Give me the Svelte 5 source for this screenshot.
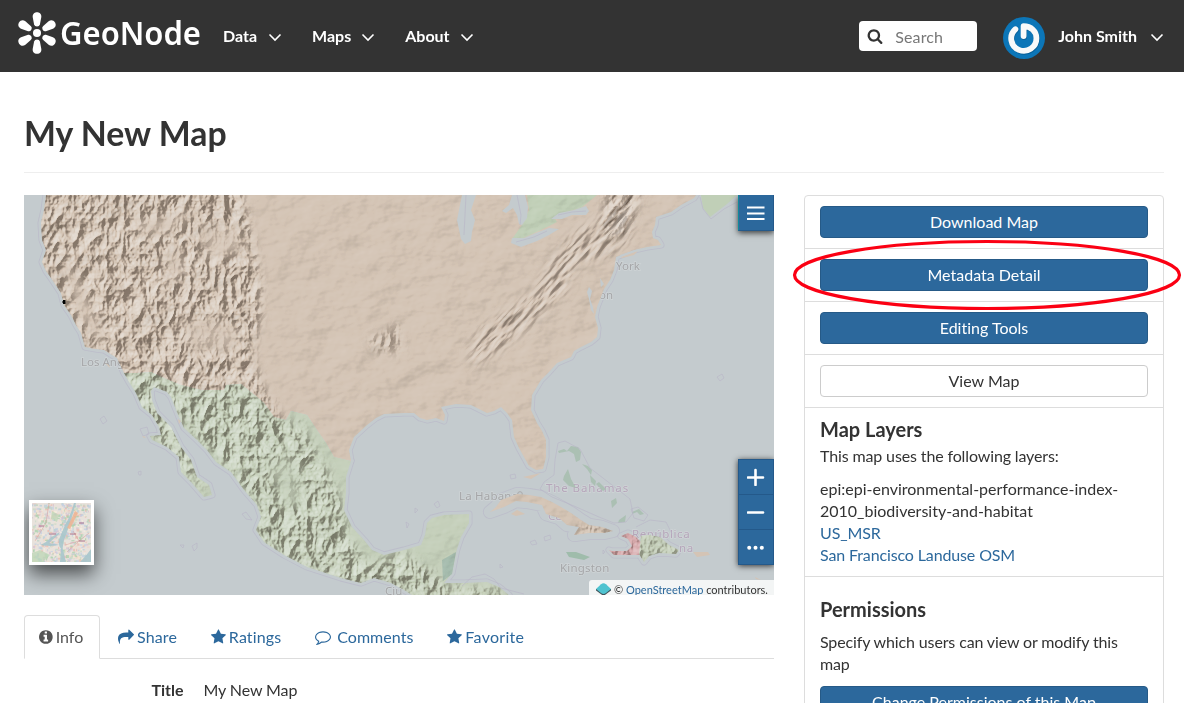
<script>
  const menu = [
    { label: 'Data', gap: 11 },
    { label: 'Maps', gap: 10 },
    { label: 'About', gap: 10 }
  ];

  const icons = {
    info: 'M1152 1376v-160q0-14-9-23t-23-9h-96v-512q0-14-9-23t-23-9h-320q-14 0-23 9t-9 23v160q0 14 9 23t23 9h96v320h-96q-14 0-23 9t-9 23v160q0 14 9 23t23 9h448q14 0 23-9t9-23zm-128-896v-160q0-14-9-23t-23-9h-192q-14 0-23 9t-9 23v160q0 14 9 23t23 9h192q14 0 23-9t9-23zm640 416q0 209-103 385.5t-279.5 279.5-385.5 103-385.5-103-279.5-279.5-103-385.5 103-385.5 279.5-279.5 385.5-103 385.5 103 279.5 279.5 103 385.5z',
    star: 'M1728 647q0 22-26 48l-363 354 86 500q1 7 1 20 0 21-10.5 35.5t-30.5 14.5q-19 0-40-12l-449-236-449 236q-22 12-40 12-21 0-31.5-14.5t-10.5-35.5q0-6 2-20l86-500-364-354q-25-27-25-48 0-37 56-46l502-73 225-455q19-41 49-41t49 41l225 455 502 73q56 9 56 46z',
    share: 'M1792 640q0 26-19 45l-512 512q-19 19-45 19t-45-19-19-45v-256h-224q-98 0-175.5 6t-154 21.5-133 42.5-105.5 69.5-80 101-48.5 138.5-17.5 181q0 55 5 123 0 6 2.5 23.5t2.5 26.5q0 15-8.5 25t-23.5 10q-16 0-28-17-7-9-13-22t-13.5-30-10.5-24q-127-285-127-451 0-199 53-333 162-403 875-403h224v-256q0-26 19-45t45-19 45 19l512 512q19 19 19 45z',
    comment: 'M896 384q-204 0-381.5 69.5t-282 187.5-104.5 255q0 112 71.5 213.5t201.5 175.5l87 50-27 96q-24 91-70 172 152-63 275-171l43-38 57 6q69 8 130 8 204 0 381.5-69.5t282-187.5 104.5-255-104.5-255-282-187.5-381.5-69.5zm896 512q0 174-120 321.5t-326 233-450 85.5q-70 0-145-8-198 175-460 242-49 14-114 22h-5q-15 0-27-10.5t-16-27.5v-1q-3-4-.5-12t2-10 4.5-9.5l6-9 7-8.5 8-9q7-8 31-34.5t34.5-38 31-39.5 32.5-51 27-59 26-76q-157-89-247.5-220t-90.5-281q0-174 120-321.5t326-233 450-85.5 450 85.5 326 233 120 321.5z',
    search: 'M1216 832q0-185-131.5-316.5t-316.5-131.5-316.5 131.5-131.5 316.5 131.5 316.5 316.5 131.5 316.5-131.5 131.5-316.5zm512 832q0 52-38 90t-90 38q-54 0-90-38l-343-342q-179 124-399 124-143 0-273.5-55.5t-225-150-150-225-55.5-273.5 55.5-273.5 150-225 225-150 273.5-55.5 273.5 55.5 225 150 150 225 55.5 273.5q0 220-124 399l343 343q37 37 37 90z'
  };

  const tabs = [
    { label: 'Info', icon: 'info', vb: '128 0 1536 1792', w: 13.7, gap: 3, track: 0, active: true },
    { label: 'Share', icon: 'share', vb: '0 0 1792 1792', w: 16, gap: 3, track: 0.12 },
    { label: 'Ratings', icon: 'star', vb: '64 0 1664 1792', w: 14.9, gap: 3, track: 0.12 },
    { label: 'Comments', icon: 'comment', vb: '0 0 1792 1792', w: 16, gap: 6, track: 0.05 },
    { label: 'Favorite', icon: 'star', vb: '64 0 1664 1792', w: 14.9, gap: 3, track: 0.3 }
  ];

  const buttons = [
    { label: 'Download Map', primary: true },
    { label: 'Metadata Detail', primary: true, marked: true },
    { label: 'Editing Tools', primary: true },
    { label: 'View Map', primary: false }
  ];

  const usa = 'M22 0L20 15L17 28L18 45L22 55L18 67L22 76L27 83L37 98L40 110L47 120L52 130L57 138L61 152L72 154L80 155L93 163L100 178L113 178L127 177L142 184L157 190L177 195L200 195L202 190L217 189L233 202L240 208L250 222L262 225L267 216L283 220L293 235L302 248L310 262L327 266L325 255L330 242L343 230L352 223L360 219L380 218L390 218L396 223L403 225L412 223L420 226L421 220L417 212L432 209L447 210L455 214L463 218L470 216L477 212L483 218L488 225L490 242L495 253L500 262L505 271L512 275L519 274L522 262L522 245L518 236L513 228L507 215L508 200L517 185L525 177L533 168L547 162L550 156L557 152L567 147L573 142L574 133L571 122L573 112L580 94L586 85L590 75L592 62L610 55L623 52L637 50L634 45L629 43L628 37L631 30L632 22L647 17L657 10L670 3L672 0Z';
  const mexico = 'M113 178L127 177L142 184L157 190L177 195L200 195L202 190L217 189L233 202L240 208L250 222L262 225L267 216L283 220L293 235L302 248L310 262L327 266L322 282L322 298L320 315L328 332L340 345L348 355L360 360L380 355L397 350L401 340L403 328L408 323L420 320L445 319L445 328L437 342L433 354L432 358L428 378L420 388L440 388L463 387L475 392L485 400L388 400L380 395L367 388L350 383L337 388L317 383L283 372L260 360L240 347L232 335L237 322L233 310L220 295L207 277L192 267L183 255L173 245L160 233L155 222L147 202L143 197L130 192L127 196L128 205L133 218L147 232L157 252L167 265L173 282L185 290L188 300L180 302L167 287L157 277L155 262L143 252L128 245L126 241L137 240L135 232L128 220L118 212L112 198L105 187L100 178Z';
  const cuba = 'M466 317L472 312L477 305L493 299L505 300L517 302L528 307L537 312L547 318L557 325L565 330L578 332L589 336L580 338L565 338L550 340L555 332L543 330L535 323L522 319L518 310L503 307L492 306L480 312Z';
  const hispaniolaW = 'M597 341L604 338L612 342L617 347L617 360L610 360L590 360L585 355L588 356L603 356L608 351L604 344Z';
  const hispaniolaE = 'M617 341L625 340L636 342L645 350L655 355L652 359L635 358L625 361L620 367L615 359Z';

  const hues = ['#c4d8c3', '#efd5ca', '#b8cfd8', '#f2e3cf', '#d6c1d1', '#c2cfe3', '#f6ecdf', '#e9b9ae', '#a7d0a9'];
  let seed = 11;
  const rnd = () => ((seed = (seed * 16807) % 2147483647) / 2147483647);
  const blocks = Array.from({ length: 700 }, () => ({
    x: rnd() * 59, y: rnd() * 59, w: 1 + rnd() * 2.2, h: 1 + rnd() * 2,
    fill: hues[Math.floor(rnd() * hues.length)]
  }));
</script>

{#snippet chevron()}
  <svg class="chev" width="14" height="9" viewBox="0 0 14 9"><path d="M1.5 1.5L7 7L12.5 1.5" fill="none" stroke="#fff" stroke-width="1.6" /></svg>
{/snippet}

<header>
  <a class="logo" href="#top" aria-label="GeoNode">
    <svg width="186" height="46" viewBox="0 0 186 46">
      <g fill="#fff">
        {#each [0, 60, 120, 180, 240, 300] as a}
          <path transform="rotate({a} 21 22)" d="M21 1.2C24 1.2 25.6 3.4 25.3 6.1L23.9 13.4Q23.4 15.4 21 15.4Q18.6 15.4 18.1 13.4L16.7 6.1C16.4 3.4 18 1.2 21 1.2Z" />
        {/each}
        <circle cx="21" cy="22" r="4" />
      </g>
      <text x="44" y="34" textLength="141" lengthAdjust="spacingAndGlyphs">GeoNode</text>
    </svg>
  </a>
  <nav>
    {#each menu as m}
      <a href="#top" style="gap:{m.gap}px">{m.label}{@render chevron()}</a>
    {/each}
  </nav>
  <div class="search">
    <svg width="16" height="16" viewBox="0 0 1792 1792"><path fill="#333" d={icons.search} /></svg>
    <span>Search</span>
  </div>
  <svg class="avatar" width="42" height="42" viewBox="0 0 42 42">
    <circle cx="21" cy="21" r="21" fill="#0c76b8" />
    <g fill="none" stroke-linecap="round" stroke-linejoin="round">
      <path d="M20.6 19V9.2C28 9.2 33.4 14.3 33.4 21A12.6 12.4 0 1 1 12.4 12.2" stroke="#075f97" stroke-width="5.8" transform="translate(.5 .9)" />
      <path d="M20.6 19V9.2C28 9.2 33.4 14.3 33.4 21A12.6 12.4 0 1 1 12.4 12.2" stroke="#f8f9fa" stroke-width="5.8" />
    </g>
  </svg>
  <a class="user" href="#top">John Smith{@render chevron()}</a>
</header>

<main>
  <h1>My New Map</h1>
  <div class="cols">
    <section class="left">
      <div class="map">
        <svg class="terrain" width="750" height="400" viewBox="0 0 750 400">
          <defs>
            <filter id="relief" x="0" y="0" width="100%" height="100%" color-interpolation-filters="sRGB">
              <feTurbulence type="turbulence" baseFrequency="0.06 0.042" numOctaves="4" seed="8" result="n" />
              <feDiffuseLighting in="n" surfaceScale="-5" diffuseConstant="1" lighting-color="#fff"><feDistantLight azimuth="220" elevation="31" /></feDiffuseLighting>
              <feComponentTransfer><feFuncR type="linear" slope=".4" intercept=".315" /><feFuncG type="linear" slope=".42" intercept=".302" /><feFuncB type="linear" slope=".43" intercept=".292" /></feComponentTransfer>
            </filter>
            <filter id="soft" x="0" y="0" width="100%" height="100%" color-interpolation-filters="sRGB">
              <feTurbulence type="fractalNoise" baseFrequency="0.025 0.04" numOctaves="4" seed="3" />
              <feDiffuseLighting surfaceScale="1.6" diffuseConstant="1" lighting-color="#fff"><feDistantLight azimuth="215" elevation="31" /></feDiffuseLighting>
              <feComponentTransfer><feFuncR type="linear" slope=".4" intercept=".3" /><feFuncG type="linear" slope=".4" intercept=".3" /><feFuncB type="linear" slope=".4" intercept=".298" /></feComponentTransfer>
            </filter>
            <filter id="ridge" x="0" y="0" width="100%" height="100%" color-interpolation-filters="sRGB">
              <feTurbulence type="fractalNoise" baseFrequency="0.035 0.15" numOctaves="3" seed="5" />
              <feDiffuseLighting surfaceScale="3.5" diffuseConstant="1" lighting-color="#fff"><feDistantLight azimuth="260" elevation="31" /></feDiffuseLighting>
              <feComponentTransfer><feFuncR type="linear" slope=".36" intercept=".33" /><feFuncG type="linear" slope=".37" intercept=".32" /><feFuncB type="linear" slope=".38" intercept=".312" /></feComponentTransfer>
            </filter>
            <filter id="feather" x="-20%" y="-20%" width="140%" height="140%"><feGaussianBlur stdDeviation="5" /></filter>
            <clipPath id="land"><path d={usa} /><path d={mexico} /><path d={cuba} /><path d={hispaniolaW} /><path d={hispaniolaE} /></clipPath>
            <mask id="highlands" maskUnits="userSpaceOnUse" x="0" y="0" width="750" height="400">
              <g filter="url(#feather)">
                <path fill="#fff" d="M10 -10H215L225 25L232 60L238 90L236 130L228 160L240 195L262 230L275 225L300 270L315 300L325 345L345 370L380 355V410H340L230 345L235 310L180 250L150 215L185 300L150 270L100 190L55 145L15 70Z" />
                <path fill="#000" opacity=".95" d="M36 62L52 75L70 112L83 149L72 150L50 116Z" />
                <path fill="#000" opacity=".7" d="M105 25L175 15L150 38L120 43ZM137 58L158 52L160 80L145 88ZM174 28L215 36L224 62L178 62ZM156 128L180 122L216 130L214 156L168 160ZM240 265L275 262L280 310L258 315Z" />
                <path fill="#fff" d="M380 360L400 370L425 392L480 395V405H370Z" />
                <path fill="#fff" opacity=".7" d="M553 330L585 328L592 342H548ZM590 338H660V370H580ZM345 145L375 128L378 158L348 156ZM580 -5H620L600 40L580 45Z" />
              </g>
            </mask>
            <mask id="appalachia" maskUnits="userSpaceOnUse" x="0" y="0" width="750" height="400">
              <path filter="url(#feather)" fill="#fff" d="M444 160L455 135L480 118L510 98L528 65L545 42L575 25L590 -5L615 -5L605 45L590 58L555 68L540 98L512 125L480 152L450 170Z" />
            </mask>
          </defs>

          <rect width="750" height="400" fill="#c4cbce" />
          <g fill="none" stroke="#b9b5c8" stroke-opacity=".65" stroke-width="7" stroke-linejoin="round"><path d={usa} /><path d={mexico} /><path d={cuba} stroke-width="14" /><path d={hispaniolaW} /><path d={hispaniolaE} /></g>
          <g fill="none" stroke="#c4cbce" stroke-width="5.4" stroke-linejoin="round"><path d={usa} /><path d={mexico} /><path d={cuba} stroke-width="12.4" /><path d={hispaniolaW} /><path d={hispaniolaE} /></g>

          <g class="place" font-size="11.5">
            <text x="57" y="171">Los Angeles</text>
            <text x="563" y="104">g</text>
            <text x="575" y="104">on</text>
            <text x="592" y="75">York</text>
            <text x="435" y="305" letter-spacing=".2">La Habana</text>
            <text x="536" y="377" letter-spacing=".2">Kingston</text>
            <g fill="#b5a5ba"><text x="522" y="297" letter-spacing=".9">The Bahamas</text><text x="524" y="325">Cu</text><text x="608" y="343" letter-spacing=".6">República</text><text x="655" y="357" letter-spacing=".6">na</text></g>
            <text x="361" y="400">Ciu</text>
          </g>
          <circle cx="496" cy="299" r="2.3" fill="none" stroke="#aaa" />

          <path d={usa} fill="#d4c4b5" />
          <path d={mexico} fill="#c4cfba" />
          <path d="M432 357L418 365L419 386L428 379Z" fill="#a5bcae" />
          <path d="M503 0L505 15L498 30L488 44L497 44L517 35L533 27L530 22L542 17L557 13L573 0Z" fill="#c0cfb7" />
          <path d="M677 0L679 13L686 22L703 9L713 0Z" fill="#c0cfb7" />
          <path d="M597 62L615 55L610 60L598 63Z" fill="#d4c4b5" />
          <path d={cuba} fill="#d4c4b5" />
          <path d="M487 319L493 315L501 319L492 321ZM499 282L517 278L507 284Z" fill="#d4c4b5" />
          <path d={hispaniolaW} fill="#d5a6a9" />
          <path d={hispaniolaE} fill="#c4cfba" />
          <path d="M542 357L552 357L566 362L560 365L545 362Z" fill="#9fbcab" />
          <path d="M669 357L684 357L686 360L673 362Z" fill="#d4c4b5" />
          <path d="M534 256L540 254L543 256L547 251L554 252L557 257L556 265L552 267L550 259L545 256L535 258ZM558 269L564 271L568 275L567 280L563 274ZM540 281L544 274L547 284L552 293L545 291L539 285ZM566 280L572 286L571 291L567 287ZM575 287L582 294L579 296L572 289ZM587 306L592 303L593 308L588 313ZM608 317L615 314L620 319L616 320L613 317L608 319ZM595 325L602 320L601 327L594 328Z" fill="#abc0b3" />

          <g class="shade" clip-path="url(#land)" opacity=".8"><rect width="750" height="400" filter="url(#soft)" /></g>
          <g class="shade" clip-path="url(#land)"><g mask="url(#highlands)"><rect width="750" height="400" filter="url(#relief)" /></g></g>
          <g class="shade" clip-path="url(#land)"><g mask="url(#appalachia)"><rect x="300" y="-200" width="450" height="500" transform="rotate(-48 525 85)" filter="url(#ridge)" /></g></g>
          <g fill="#c4cbce">
            <path d="M438 0L433 25L437 44L441 49L447 46L448 37L451 25L447 15L452 0Z" />
            <path d="M488 0L485 10L478 16L482 18L489 13L493 20L495 29L498 30L503 23L504 12L501 0Z" />
            <path d="M488 43L487 48L497 52L513 46L525 40L535 34L525 33L512 38L500 43Z" />
            <path d="M527 24L535 18L550 15L562 11L565 16L562 20L548 20L538 24Z" />
            <path d="M565 92L568 96L566 104L569 112L570 119L567 115L565 104L563 97ZM576 83L580 89L577 92ZM596 60L612 55L627 52L624 54L611 57L597 62Z" />
          </g>

          <g fill="none" stroke="#b9b5c8" stroke-opacity=".7" stroke-width=".9">
            <path d="M442 0L440 40M493 0L497 20L496 30M492 47L510 42L523 36M534 20L548 17L562 16M676 2L679 14L687 24L700 14L713 7M534 248L541 246L556 254L566 273L588 290L606 304L609 318L602 327L590 328L575 322L550 311L528 302L516 294L520 287L530 280L531 265ZM607 314L614 312L624 320L620 326L610 323ZM612 332L626 325L642 327L648 339M438 391L448 382L461 379L470 384L477 393L500 399" />
            <path d="M410 309l4-3 2 5-3 2zM391 313l3 2-3 3zM382 327l3 2-2 4zM506 347l5-2 2 4-5 1zM520 342l6-2 1 4-6 2zM486 280l5-1 1 4-5 1zM693 182l5-3 2 4-4 3zM76 224l4-3 3 5-4 3zM116 234l7-2 2 7-6 2zM114 277l3-1 0 4-2 0zM218 319l4-2 6 8-6-1zM156 350l4 0-1 3zM168 351l5-3 0 5-3 3zM579 355l2 2-2 2zM476 369l3 3-3 1z" />
          </g>
          <path d="M66 154l6-1 1 1zM81 168l4 2 1 3zM118 241l4 1-2 1zM154 224l3 2-2 3zM722 367l3 1-2 2zM731 382l6 3-5-1z" fill="#d4c4b5" />
          <path d="M39 105h2.5v4h-2.5zM38.5 106h3v2h-3z" fill="#000" />
        </svg>

        <button class="ctl menu" aria-label="Menu">
          <svg width="18" height="14" viewBox="0 0 18 14"><path d="M0 1.5H17.5M0 7.5H17.5M0 13H17.5" stroke="#fff" stroke-width="1.8" /></svg>
        </button>
        <div class="zoom">
          <button class="ctl" aria-label="Zoom in"><svg width="18" height="18" viewBox="0 0 18 18"><path d="M8.5 2V17M1 9.5H16" stroke="#fff" stroke-width="2.6" stroke-linecap="round" /></svg></button>
          <button class="ctl" aria-label="Zoom out"><svg width="18" height="18" viewBox="0 0 18 18"><path d="M1 9.5H16" stroke="#fff" stroke-width="2.6" stroke-linecap="round" /></svg></button>
          <button class="ctl" aria-label="More"><svg width="18" height="18" viewBox="0 0 18 18" fill="#fff"><circle cx="2.2" cy="9.7" r="2" /><circle cx="8.5" cy="9.7" r="2" /><circle cx="14.8" cy="9.7" r="2" /></svg></button>
        </div>
        <div class="thumb">
          <svg width="59" height="59" viewBox="0 0 59 59">
            <rect width="59" height="59" fill="#e8e2dc" />
            {#each blocks as b}<rect x={b.x} y={b.y} width={b.w} height={b.h} fill={b.fill} opacity=".75" />{/each}
            <path d="M42 0Q38 14 33 22L28 34Q25 40 29 46L28 59H34L31 47Q30 40 34 32L40 14L44 0ZM8 42Q14 40 18 35L28 29L26 32L17 40L27 42L18 43ZM48 59Q55 52 59 46V59Z" fill="#a9c7cc" opacity=".9" />
            <path d="M43 8L35 25L38 26L46 10Z" fill="#edb391" opacity=".85" />
            <path d="M0 50l8-3 10 5-7 7H0zM20 8l7 4-2 7-6-3z" fill="#b7d6b1" opacity=".65" />
            <path d="M33 42L47 38L57 30M35 49L47 38L41 28M3 38L14 20L17 0" fill="none" stroke="#d7a5a1" stroke-width=".6" />
            <path d="M17 31h7M38 31h6M47 38h6M7 23h5M47 20h5" stroke="#a05c79" stroke-width=".8" />
          </svg>
        </div>
        <div class="credit">
          <svg width="15" height="13" viewBox="0 0 15 13"><path d="M0 7.5L7.5 13L15 7.5V6H0Z" fill="#41545a" /><path d="M0 6L5 1.2Q7.5-.6 10 1.2L15 6L10 10Q7.5 11.8 5 10Z" fill="#4fc3d0" /></svg>
          <span>© <a href="#top">OpenStreetMap</a> contributors.</span>
        </div>
      </div>

      <div class="tabs">
        {#each tabs as t}
          <a href="#top" class:active={t.active} style="gap:{t.gap}px;letter-spacing:{t.track}px">
            <svg width={t.w} height="16" viewBox={t.vb}><path fill="currentColor" d={icons[t.icon]} /></svg>{t.label}
          </a>
        {/each}
      </div>
      <dl><dt>Title</dt><dd>My New Map</dd></dl>
    </section>

    <aside>
      {#each buttons as b}
        <div class="item">
          <button class="btn" class:primary={b.primary}>{b.label}</button>
          {#if b.marked}
            <svg class="ring" width="392" height="72" viewBox="0 0 392 72"><ellipse cx="196" cy="36" rx="192.5" ry="33.5" fill="none" stroke="#fb0013" stroke-width="3.2" /></svg>
          {/if}
        </div>
      {/each}
      <div class="item layers">
        <h4>Map Layers</h4>
        <p>This map uses the following layers:</p>
        <ul>
          <li>epi:epi-environmental-performance-index-2010_biodiversity-and-habitat</li>
          <li class="tight"><a href="#top">US_MSR</a></li>
          <li class="tight"><a href="#top">San Francisco Landuse OSM</a></li>
        </ul>
      </div>
      <div class="item perms">
        <h4>Permissions</h4>
        <p>Specify which users can view or modify this map</p>
        <button class="btn primary">Change Permissions of this Map</button>
      </div>
    </aside>
  </div>
</main>

<style>
  :global(html), :global(body) { margin: 0; height: 703px; overflow: hidden; background: #fff; }
  :global(#app) { height: 703px; overflow: hidden; font: 16px/22px Lato, "Liberation Sans", sans-serif; font-variant-ligatures: none; color: #333; }
  a { color: #2c689c; text-decoration: none; }
  svg { display: block; flex: none; }
  h1, h4, p, ul, dl, dd { margin: 0; padding: 0; }
  ul { list-style: none; }

  header { display: flex; align-items: flex-start; height: 72px; background: #333; box-sizing: border-box; padding: 0 20px 0 16px; }
  header a { color: #fff; font-weight: 700; display: flex; align-items: center; }
  header .logo { margin-top: 11px; width: 186px; }
  .logo svg { overflow: visible; }
  .logo text { font: 600 32px "Noto Sans", sans-serif; fill: #fff; }
  nav { display: flex; gap: 30px; margin: 25px auto 0 21px; }
  .chev { margin-top: 2px; }
  .search { display: flex; align-items: center; width: 118px; height: 30px; margin-top: 21px; background: #fff; border-radius: 4px; box-sizing: border-box; padding-left: 8px; gap: 12px; color: #777; }
  .search span { padding-top: 2px; letter-spacing: .15px; }
  .avatar { margin: 17px 13px 0 26px; }
  .user { gap: 13px; margin-top: 25px; }

  main { padding: 0 20px 0 24px; }
  h1 { font-size: 33.8px; font-weight: 700; line-height: 40px; height: 101px; padding-top: 41px; box-sizing: border-box; border-bottom: 1px solid #eee; margin-bottom: 22px; }
  .cols { display: flex; gap: 30px; align-items: flex-start; }
  .left { width: 750px; }
  .map { position: relative; width: 750px; height: 400px; overflow: hidden; }
  .shade { mix-blend-mode: hard-light; }
  .place { font-family: "Noto Sans", sans-serif; fill: #a5a6a8; paint-order: stroke; stroke: #cfd4d6; stroke-width: 1.5px; }
  .ctl { width: 36px; height: 36px; border: 1px solid #24598a; background: #2c689c; padding: 0; display: flex; align-items: center; justify-content: center; box-sizing: border-box; }
  .menu { position: absolute; right: 0; top: 0; border-top: 0; border-left-color: #12899a; box-shadow: 0 2px 6px rgba(0,0,0,.7); }
  .zoom { position: absolute; right: 0; top: 264px; box-shadow: 0 1px 6px rgba(0,0,0,.75); }
  .zoom .ctl + .ctl { height: 35px; border-top: 0; }
  .thumb { position: absolute; left: 5px; top: 305px; padding: 3px; background: #fff; box-shadow: 0 9px 18px rgba(0,0,0,.62); }
  .credit { position: absolute; right: 0; bottom: 0; height: 15px; width: 185px; box-sizing: border-box; padding: 3px 0 0 7px; display: flex; gap: 3px; background: rgba(255,255,255,.8); border-radius: 3px 0 0 0; font-size: 11px; line-height: 14px; white-space: nowrap; }

  .tabs { display: flex; margin-top: 20px; height: 44px; box-sizing: border-box; border-bottom: 1px solid #ddd; gap: 2px; }
  .tabs a { display: flex; align-items: center; box-sizing: border-box; height: 44px; padding: 0 15px; border: 1px solid transparent; border-radius: 4px 4px 0 0; }
  .tabs .active { color: #555; border-color: #ddd; border-bottom-color: #fff; background: #fff; padding: 0 15px 0 14px; width: 76px; }
  dl { display: flex; gap: 20px; margin-top: 20px; }
  dt { width: 159.5px; text-align: right; font-weight: 700; }
  dd { letter-spacing: -.1px; }

  aside { width: 360px; box-sizing: border-box; border: 1px solid #ddd; border-radius: 4px 4px 0 0; }
  .item { position: relative; padding: 10px 15px; border-bottom: 1px solid #ddd; }
  .btn { display: block; width: 100%; height: 32px; box-sizing: border-box; padding: 0; border: 1px solid #ccc; border-radius: 4px; background: #fff; color: #333; font: 16px/22px Lato, sans-serif; font-variant-ligatures: none; }
  .btn.primary { background: #2c689c; border-color: #265a87; color: #fff; }
  .ring { position: absolute; left: -14px; top: -10px; z-index: 2; pointer-events: none; }
  h4 { font-size: 20px; line-height: 22px; font-weight: 700; }
  .layers { height: 148px; padding-top: 10px; }
  .layers p { margin: 5px 0 11px; letter-spacing: -.13px; }
  .tight { letter-spacing: -.13px; }
  .perms h4 { margin: 11px 0; }
  .perms p { margin-bottom: 11px; letter-spacing: -.13px; }
</style>
